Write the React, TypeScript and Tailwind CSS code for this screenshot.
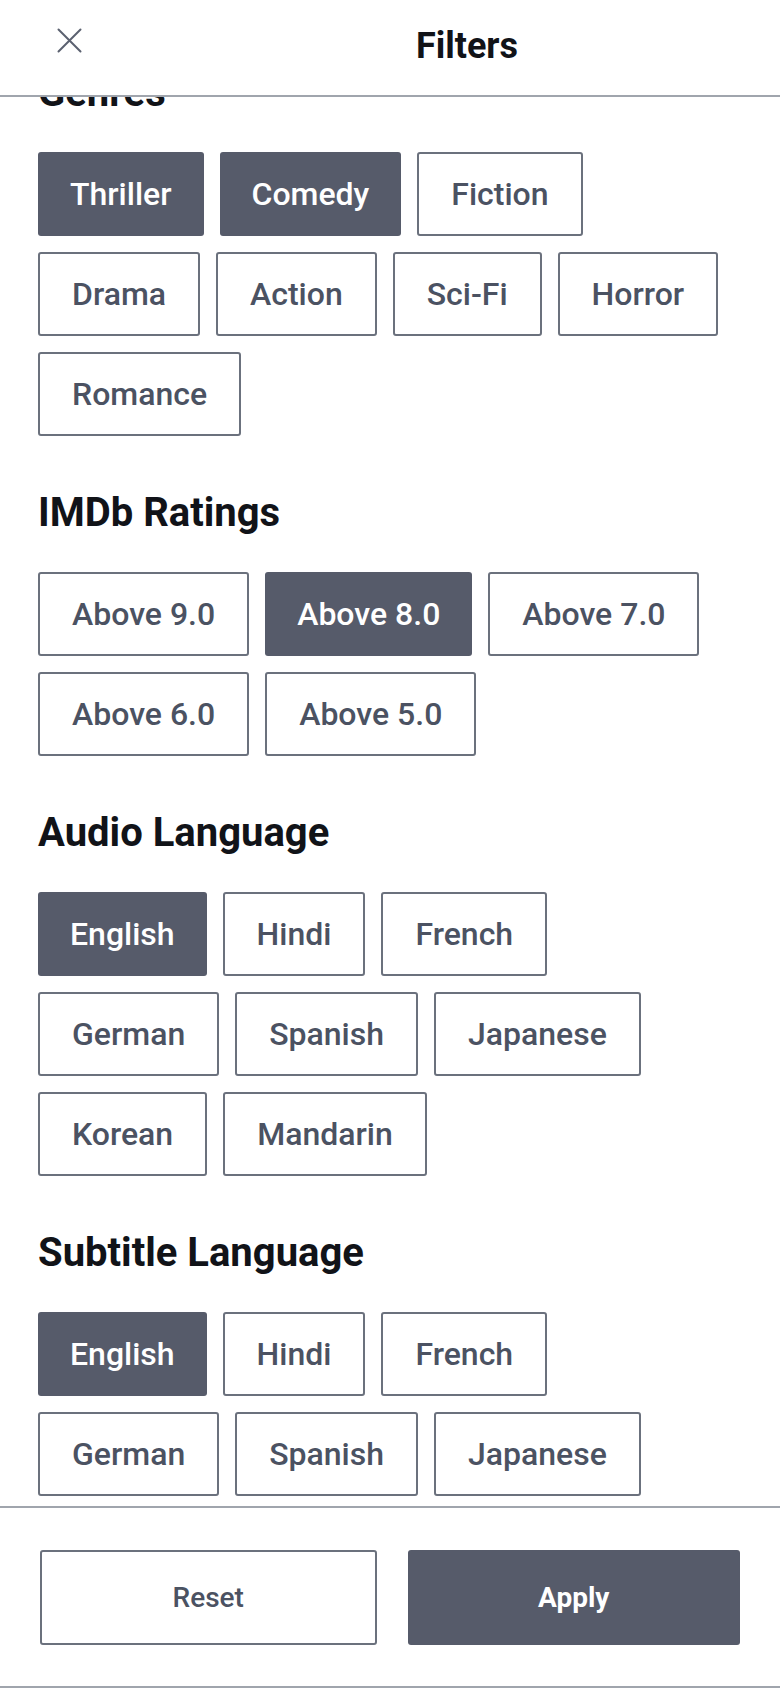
import React, { useState } from "react";

const GENRES = ["Thriller", "Comedy", "Fiction", "Drama", "Action", "Sci-Fi", "Horror", "Romance"];
const RATINGS = ["Above 9.0", "Above 8.0", "Above 7.0", "Above 6.0", "Above 5.0"];
const LANGUAGES = ["English", "Hindi", "French", "German", "Spanish", "Japanese", "Korean", "Mandarin"];

const Chip = ({ label, active, onClick }: { label: string; active: boolean; onClick: () => void }) => (
  <button
    onClick={onClick}
    className={
      active
        ? "rounded-[3px] bg-[#565b6a] px-8 py-[18px] text-[32px] leading-[48px] font-medium text-white"
        : "rounded-[3px] border-2 border-[#6b717d] bg-white px-8 py-4 text-[32px] leading-[48px] font-medium text-[#4b5262]"
    }
  >
    {label}
  </button>
);

const Section = ({
  title,
  options,
  selected,
  onToggle,
}: {
  title: string;
  options: string[];
  selected: string[];
  onToggle: (v: string) => void;
}) => (
  <section>
    <h2 className="mb-[35px] text-[40px] leading-[48px] font-bold text-[#111318]">{title}</h2>
    <div className="flex flex-wrap gap-4">
      {options.map((o) => (
        <Chip key={o} label={o} active={selected.includes(o)} onClick={() => onToggle(o)} />
      ))}
    </div>
  </section>
);

const App = () => {
  const [genres, setGenres] = useState<string[]>(["Thriller", "Comedy"]);
  const [rating, setRating] = useState<string[]>(["Above 8.0"]);
  const [audio, setAudio] = useState<string[]>(["English"]);
  const [subs, setSubs] = useState<string[]>(["English"]);

  const toggle = (list: string[], set: (v: string[]) => void) => (v: string) =>
    set(list.includes(v) ? list.filter((x) => x !== v) : [...list, v]);

  return (
    <div className="flex h-[1688px] w-full flex-col bg-white font-['Roboto','Liberation_Sans',sans-serif]">
      <header className="flex h-[97px] shrink-0 items-start border-b-2 border-[#a0a5ad] pt-[28px]">
        <button className="ml-[57px] h-[25px] w-[25px] shrink-0">
          <svg width="25" height="25" viewBox="0 0 25 25" fill="none" stroke="#5b6170" strokeWidth="2" strokeLinecap="round">
            <path d="M1.5 1.5 23.5 23.5M23.5 1.5 1.5 23.5" />
          </svg>
        </button>
        <h1 className="-mt-[2px] ml-[72px] flex-1 text-center text-[36px] leading-[40px] font-bold text-[#111318]">
          Filters
        </h1>
      </header>

      <main className="min-h-0 flex-1 overflow-hidden">
        <div className="-mt-[28px] flex flex-col gap-[53px] pl-[38px] pr-[50px]">
          <Section title="Genres" options={GENRES} selected={genres} onToggle={toggle(genres, setGenres)} />
          <Section title="IMDb Ratings" options={RATINGS} selected={rating} onToggle={(v) => setRating([v])} />
          <Section title="Audio Language" options={LANGUAGES} selected={audio} onToggle={toggle(audio, setAudio)} />
          <Section title="Subtitle Language" options={LANGUAGES} selected={subs} onToggle={toggle(subs, setSubs)} />
        </div>
      </main>

      <footer className="flex shrink-0 gap-[31px] border-y-2 border-[#a0a5ad] px-10 pt-[42px] pb-[41px]">
        <button className="h-[95px] flex-1 rounded-[3px] border-2 border-[#6b717d] bg-white text-[28px] font-medium text-[#4b5262]">
          Reset
        </button>
        <button className="h-[95px] flex-1 rounded-[3px] bg-[#565b6a] text-[28px] font-bold text-white">
          Apply
        </button>
      </footer>
    </div>
  );
};

export default App;
